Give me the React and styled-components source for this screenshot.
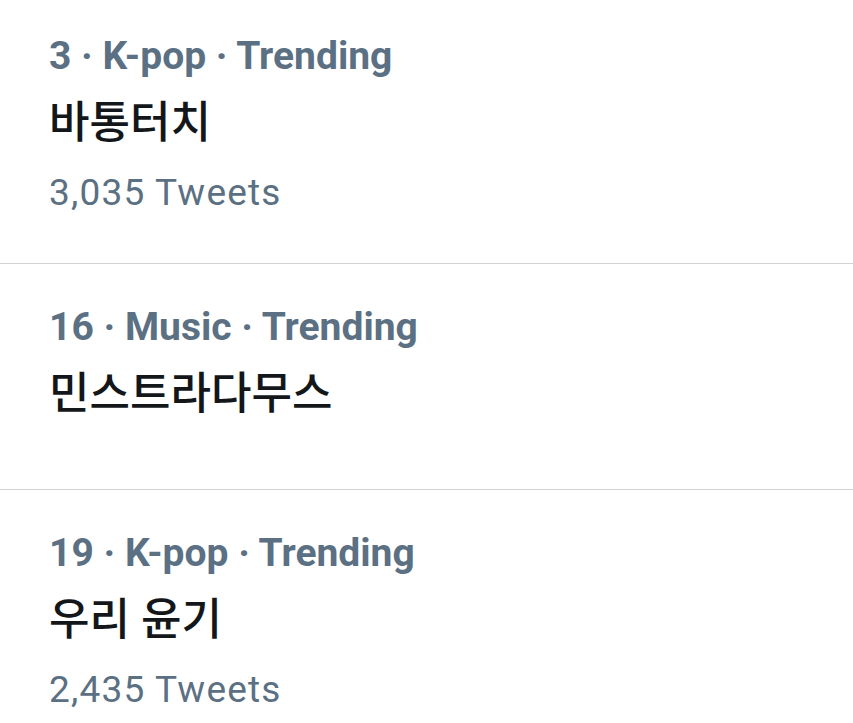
import React from 'react';
import styled, { createGlobalStyle } from 'styled-components';

const GlobalStyle = createGlobalStyle`
  html, body {
    margin: 0;
    padding: 0;
    background: #ffffff;
  }
  body {
    font-family: Roboto, "Noto Sans CJK KR", sans-serif;
    -webkit-font-smoothing: antialiased;
  }
`;

const TrendList = styled.div`
  display: flex;
  flex-direction: column;
  width: 853px;
`;

const TrendItem = styled.div`
  display: flex;
  flex-direction: column;
  padding: 33px 49px ${props => (props.$compact ? 58 : 38)}px;
  border-bottom: 1px solid #cfd3d6;

  &:first-child {
    padding-top: 26px;
  }

  &:last-child {
    border-bottom: none;
  }
`;

const TrendMeta = styled.div`
  font-family: Roboto, sans-serif;
  font-size: 39px;
  font-weight: 700;
  line-height: 60px;
  color: #5b7083;
  white-space: nowrap;
`;

const TrendName = styled.div`
  font-family: Roboto, "Noto Sans CJK KR", sans-serif;
  font-size: 44px;
  font-weight: 500;
  line-height: 74px;
  color: #14171a;
  white-space: nowrap;
`;

const TrendCount = styled.div`
  font-family: Roboto, sans-serif;
  font-size: 37px;
  font-weight: 400;
  line-height: 65px;
  letter-spacing: 1.2px;
  color: #5b7083;
  white-space: nowrap;
`;

const trends = [
  { rank: 3, category: 'K-pop', name: '바통터치', tweets: '3,035' },
  { rank: 16, category: 'Music', name: '민스트라다무스' },
  { rank: 19, category: 'K-pop', name: '우리 윤기', tweets: '2,435' },
];

export default function App() {
  return (
    <>
      <GlobalStyle />
      <TrendList>
        {trends.map(trend => (
          <TrendItem key={trend.rank} $compact={!trend.tweets}>
            <TrendMeta>
              {trend.rank} · {trend.category} · Trending
            </TrendMeta>
            <TrendName>{trend.name}</TrendName>
            {trend.tweets && <TrendCount>{trend.tweets} Tweets</TrendCount>}
          </TrendItem>
        ))}
      </TrendList>
    </>
  );
}
